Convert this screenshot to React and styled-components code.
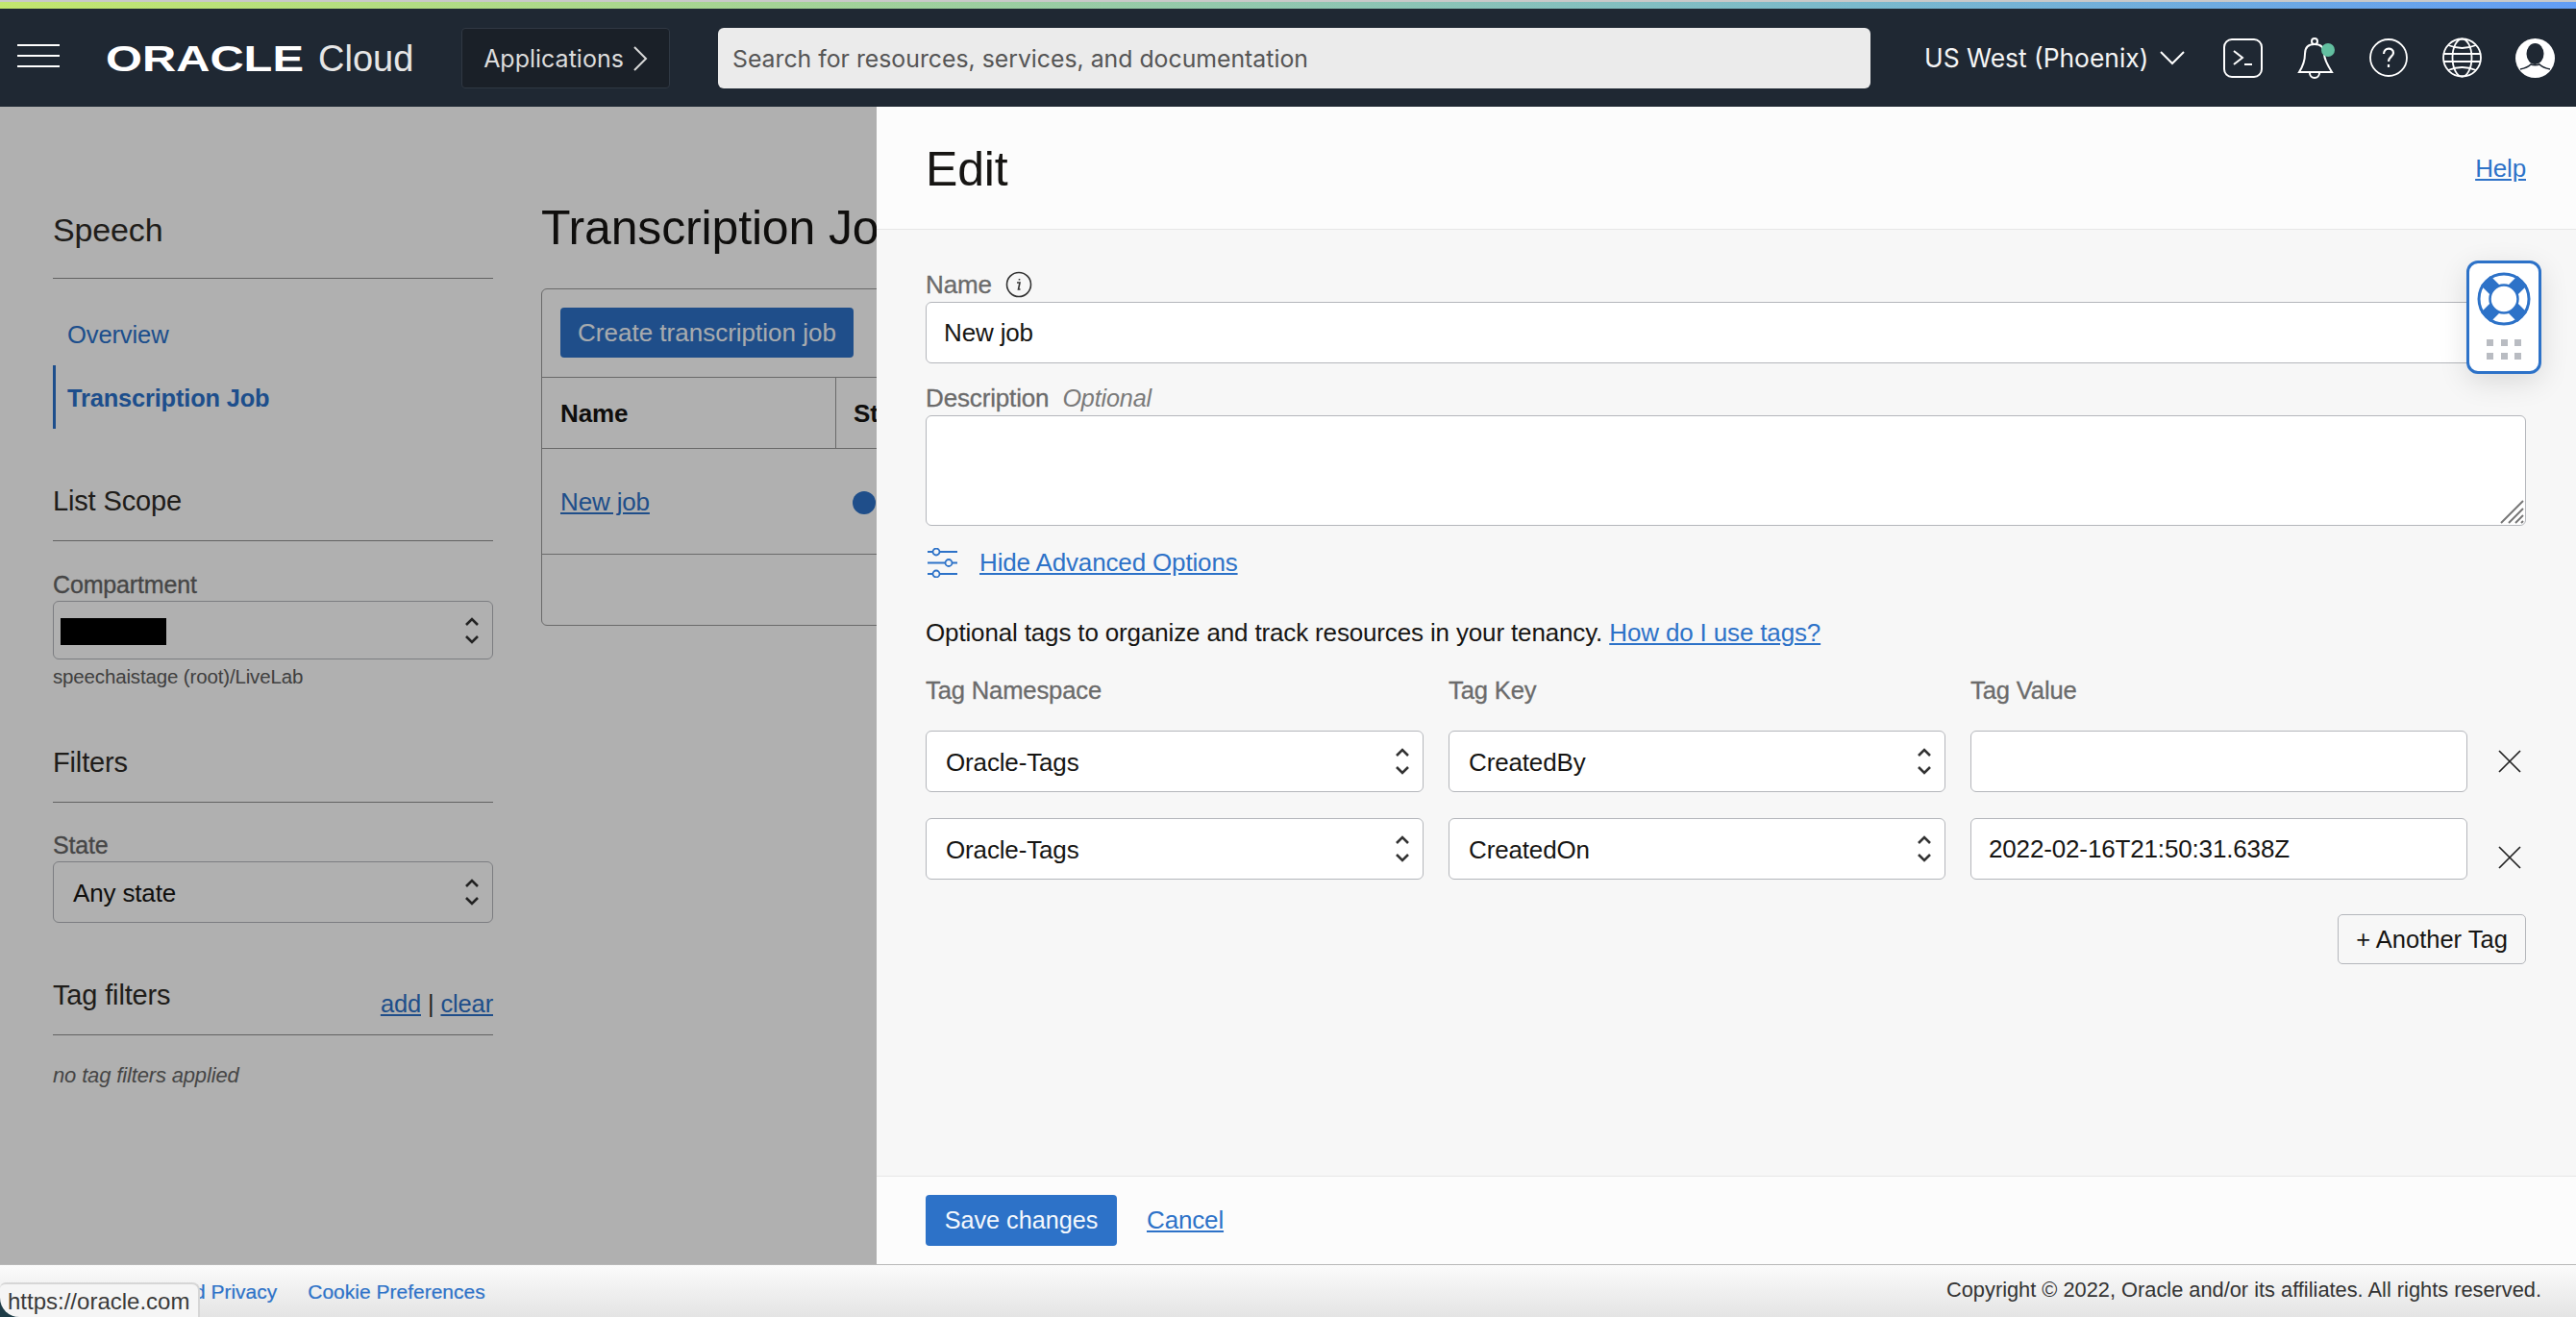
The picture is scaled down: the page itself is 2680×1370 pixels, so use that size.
import styled, { createGlobalStyle } from 'styled-components';

const GlobalStyle = createGlobalStyle`
  html, body { margin: 0; padding: 0; height: 100%; }
  body { font-family: "Liberation Sans", Arial, sans-serif; font-size: 26px; letter-spacing: -0.15px; color: #161513; background: #fff; }
  * { box-sizing: border-box; }
  a { color: #2d72c8; }
`;

const Page = styled.div`
  display: flex;
  flex-direction: column;
  height: 1370px;
  width: 2680px;
  overflow: hidden;
`;
const TopStrip = styled.div`
  height: 9px;
  border-top: 2px solid #c9c9c9;
  background: linear-gradient(90deg, #c2e66e 0%, #7ab9cc 72%, #629df5 100%);
`;
const NavBar = styled.header`
  display: flex;
  align-items: center;
  flex: none;
  height: 102px;
  background: #1f2833;
  color: #fff;
  font-family: Inter, "Liberation Sans", sans-serif;
  letter-spacing: 0;
`;
const Hamburger = styled.div`
  display: flex;
  flex-direction: column;
  gap: 9px;
  width: 44px;
  margin: 0 0 4px 18px;
  span { display: block; height: 2px; background: #fff; }
`;
const Logo = styled.div`
  display: flex;
  align-items: center;
  width: 418px;
  padding: 3px 0 0 48px;
  height: 60px;
`;
const LogoMark = styled.span`
  display: inline-block;
  width: 206px;
  font-family: "Liberation Sans", sans-serif;
  font-weight: 700;
  font-size: 36px;
  transform: scaleX(1.355);
  transform-origin: left center;
`;
const LogoCloud = styled.span`
  font-family: "Liberation Sans", sans-serif;
  font-size: 38px;
  margin-left: 15px;
  color: #e6e6e6;
`;
const AppsButton = styled.div`
  display: flex;
  align-items: center;
  justify-content: center;
  gap: 10px;
  width: 217px;
  height: 63px;
  padding-top: 2px;
  background: #1a2028;
  border: 1px solid #303843;
  border-radius: 4px;
  color: #dcdcdc;
  font-size: 25px;
`;
const SearchBox = styled.div`
  display: flex;
  align-items: center;
  width: 1199px;
  height: 63px;
  margin-left: 50px;
  padding: 2px 0 0 15px;
  background: #ebebeb;
  border-radius: 6px;
  color: #555;
  font-size: 24.8px;
`;
const Region = styled.div`
  display: flex;
  align-items: center;
  gap: 12px;
  margin-left: 56px;
  font-size: 26.4px;
  color: #f5f5f5;
`;
const NavIcons = styled.div`
  display: flex;
  align-items: center;
  gap: 35.5px;
  margin-left: 40px;
  svg { display: block; }
`;

const Content = styled.div`
  position: relative;
  display: flex;
  flex: 1;
  overflow: hidden;
`;
const Sidebar = styled.aside`
  flex: none;
  width: 458px;
  margin-left: 55px;
  padding-top: 104px;
`;
const SideHeading = styled.div`
  display: flex;
  justify-content: space-between;
  align-items: flex-end;
  height: ${(p) => (p.$main ? 75 : 66)}px;
  padding-bottom: ${(p) => (p.$main ? 25 : 16)}px;
  margin-top: ${(p) => p.$top || 0}px;
  border-bottom: 1px solid #8f8f8f;
  line-height: 50px;
  font-size: ${(p) => (p.$main ? 34 : 29)}px;
  color: #2e2b27;
`;
const SideLinks = styled.span`
  font-size: 25.5px;
  line-height: 34px;
  margin-bottom: -1px;
  color: #333;
  a { margin: 0 7px; }
  a:first-child { margin-left: 0; }
  a:last-child { margin-right: 0; }
`;
const SideNav = styled.nav`
  margin-top: 29px;
`;
const SideItem = styled.a`
  display: flex;
  align-items: center;
  height: ${(p) => (p.$active ? 66 : 61)}px;
  padding-left: ${(p) => (p.$active ? 12 : 15)}px;
  padding-top: ${(p) => (p.$active ? 2 : 0)}px;
  padding-bottom: ${(p) => (p.$active ? 0 : 2)}px;
  border-left: ${(p) => (p.$active ? '3px solid #2a72cb' : 'none')};
  font-size: ${(p) => (p.$active ? 25.4 : 25.6)}px;
  font-weight: ${(p) => (p.$active ? 700 : 400)};
  color: #2a72cb;
`;
const SideLabel = styled.div`
  height: 30px;
  margin-top: ${(p) => p.$top}px;
  margin-bottom: 2px;
  line-height: 30px;
  font-size: 25px;
  color: #666;
  -webkit-text-stroke: 0.3px #666;
`;
const Select = styled.div`
  position: relative;
  display: flex;
  align-items: center;
  height: ${(p) => p.$h || 64}px;
  padding-left: ${(p) => p.$pad || 20}px;
  padding-top: 2px;
  background: ${(p) => (p.$plain ? 'transparent' : '#fff')};
  border: 1px solid #b4b6bb;
  border-radius: 6px;
  font-size: 26px;
  color: #161513;
`;
const Updown = styled.svg`
  position: absolute;
  right: 13px;
  top: 50%;
  transform: translateY(-50%);
`;
const Redacted = styled.div`
  width: 110px;
  height: 28px;
  background: #000;
`;
const Hint = styled.div`
  margin-top: 6px;
  height: 24px;
  line-height: 24px;
  font-size: 20.5px;
  color: #5c5c5c;
`;
const NoTags = styled.div`
  margin-top: 30px;
  line-height: 24px;
  font-size: 22px;
  font-style: italic;
  color: #666;
`;

const Main = styled.main`
  flex: none;
  width: 1400px;
  margin-left: 50px;
  padding-top: 96px;
`;
const PageTitle = styled.h1`
  margin: 0 0 33px;
  line-height: 60px;
  font-size: 50px;
  font-weight: 400;
`;
const Card = styled.div`
  width: 1200px;
  height: 351px;
  border: 1px solid #9a9a9a;
  border-radius: 6px;
`;
const CardBar = styled.div`
  height: 92px;
  padding: 19px 19px;
  border-bottom: 1px solid #9a9a9a;
`;
const PrimaryButton = styled.button`
  height: ${(p) => p.$h}px;
  width: ${(p) => p.$w}px;
  padding: 0;
  border: 0;
  border-radius: 4px;
  background: #2d72c8;
  color: #f4f8fd;
  font: inherit;
  font-size: ${(p) => p.$size}px;
`;
const Row = styled.div`
  display: grid;
  grid-template-columns: 305px 1fr;
  align-items: center;
  height: ${(p) => p.$h}px;
  border-bottom: 1px solid #9a9a9a;
`;
const HeadCell = styled.div`
  display: flex;
  align-items: center;
  height: 100%;
  padding-left: 19px;
  padding-top: 2px;
  font-weight: 700;
  & + & { border-left: 1px solid #9a9a9a; padding-left: 18px; }
`;
const BodyCell = styled.div`
  display: flex;
  align-items: center;
  gap: 10px;
  padding-left: 19px;
  padding-top: 2px;
  & + & { padding-left: 18px; }
`;
const StatusDot = styled.span`
  width: 24px;
  height: 24px;
  border-radius: 50%;
  background: #2d72c8;
`;

const Overlay = styled.div`
  position: absolute;
  inset: 0;
  background: rgba(0, 0, 0, 0.31);
`;
const Drawer = styled.section`
  position: absolute;
  top: 0;
  right: 0;
  bottom: 0;
  width: 1768px;
  display: flex;
  flex-direction: column;
  background: #f7f7f7;
`;
const DrawerHead = styled.div`
  display: flex;
  justify-content: space-between;
  align-items: center;
  flex: none;
  height: 128px;
  padding: 2px 52px 0 51px;
  background: #fcfcfc;
  border-bottom: 1px solid #e6e6e6;
`;
const DrawerTitle = styled.h2`
  margin: 0;
  font-size: 50px;
  font-weight: 400;
`;
const DrawerBody = styled.div`
  flex: 1;
  padding: 42px 52px 0 51px;
`;
const FieldLabel = styled.div`
  display: flex;
  align-items: center;
  gap: 14px;
  height: 30px;
  margin-top: ${(p) => p.$top || 0}px;
  margin-bottom: 3px;
  font-size: 26px;
  color: #6b6b6b;
  -webkit-text-stroke: 0.3px #6b6b6b;
  em { color: #7a7a7a; font-size: 25.2px; -webkit-text-stroke: 0; }
`;
const TextInput = styled.input`
  display: block;
  width: 100%;
  height: 64px;
  padding: 0 18px;
  border: 1px solid #b4b6bb;
  border-radius: 6px;
  background: #fff;
  font: inherit;
  font-size: 26px;
  letter-spacing: inherit;
  color: #161513;
`;
const TextAreaWrap = styled.div`
  position: relative;
  height: 115px;
`;
const TextArea = styled.textarea`
  display: block;
  width: 100%;
  height: 100%;
  border: 1px solid #b4b6bb;
  border-radius: 6px;
  background: #fff;
  resize: none;
`;
const Grip = styled.svg`
  position: absolute;
  right: 2px;
  bottom: 2px;
`;
const AdvancedRow = styled.div`
  display: flex;
  align-items: center;
  gap: 22px;
  height: 40px;
  margin-top: 18px;
  padding-left: 2px;
`;
const TagIntro = styled.p`
  margin: 38px 0 0;
  line-height: 30px;
  font-size: 26px;
`;
const TagGrid = styled.div`
  display: grid;
  grid-template-columns: 518px 517px 517px 1fr;
  column-gap: 26px;
  row-gap: 27px;
  margin-top: 30px;
`;
const TagHead = styled.div`
  height: 30px;
  line-height: 30px;
  font-size: 25.6px;
  color: #6b6b6b;
  -webkit-text-stroke: 0.3px #6b6b6b;
`;
const RemoveTag = styled.div`
  display: flex;
  align-items: center;
  justify-content: center;
  margin-top: ${(p) => p.$top || 0}px;
`;
const ActionRow = styled.div`
  display: flex;
  justify-content: flex-end;
  margin-top: 36px;
`;
const GhostButton = styled.button`
  width: 196px;
  height: 52px;
  padding: 0;
  border: 1px solid #b4b6bb;
  border-radius: 5px;
  background: #f7f7f7;
  font: inherit;
  font-size: 25.5px;
  color: #161513;
`;
const DrawerFoot = styled.div`
  display: flex;
  align-items: center;
  gap: 31px;
  flex: none;
  height: 92px;
  padding-left: 51px;
  background: #fcfcfc;
  border-top: 1px solid #e6e6e6;
`;
const HelpWidget = styled.div`
  position: absolute;
  top: 160px;
  right: 36px;
  display: flex;
  flex-direction: column;
  align-items: center;
  width: 78px;
  height: 118px;
  padding-top: 9px;
  background: #fff;
  border: 3px solid #2d72c8;
  border-radius: 12px;
  box-shadow: 0 8px 30px rgba(0, 0, 0, 0.12);
`;
const DotGrid = styled.div`
  display: grid;
  grid-template-columns: repeat(3, 7px);
  gap: 7px 7.5px;
  margin-top: 14px;
  span { width: 7px; height: 7px; background: #b9bcc2; }
`;

const Footer = styled.footer`
  position: relative;
  display: flex;
  justify-content: space-between;
  align-items: center;
  flex: none;
  height: 55px;
  padding: 0 36px 2px 49px;
  border-top: 1px solid #b8b8b8;
  background: linear-gradient(180deg, #fbfbfb 0%, #e4e4e4 100%);
  letter-spacing: 0;
  color: #333;
  a { text-decoration: none; margin-right: 32px; font-size: 21px; -webkit-text-stroke: 0.2px #2d72c8; }
  &::before {
    content: '';
    position: absolute;
    left: 0;
    bottom: 0;
    width: 20px;
    height: 20px;
    background: #1d3c47;
  }
`;
const Copyright = styled.span`
  font-size: 21.8px;
`;
const StatusTip = styled.div`
  position: absolute;
  left: 0;
  bottom: 0;
  width: 208px;
  height: 36px;
  padding-left: 8px;
  background: #f5f5f5;
  border-top: 2px solid #d6d6d6;
  border-right: 2px solid #d6d6d6;
  border-radius: 6px 8px 0 20px;
  line-height: 36px;
  font-size: 24px;
  color: #3a3a3a;
`;

const Chevron = ({ d, w, h, color = '#fff', sw = 2 }) => (
  <svg width={w} height={h} viewBox={`0 0 ${w} ${h}`} fill="none" stroke={color} strokeWidth={sw}>
    <path d={d} />
  </svg>
);

const Arrows = () => (
  <Updown width="16" height="30" viewBox="0 0 16 30" fill="none" stroke="#333" strokeWidth="2.6">
    <path d="M2 9l6-6 6 6M2 21l6 6 6-6" />
  </Updown>
);

const TerminalIcon = () => (
  <svg width="41" height="41" viewBox="0 0 41 41" fill="none" stroke="#fff" strokeWidth="2">
    <rect x="1" y="1" width="39" height="39" rx="8" />
    <path d="M11 13l9 7-9 7M22 27h8" />
  </svg>
);

const BellIcon = () => (
  <svg width="40" height="43" viewBox="0 0 40 43" fill="none" stroke="#fff" strokeWidth="2">
    <circle cx="18" cy="4" r="3" />
    <path d="M2 36C7 28 8 22 8 17 8 10 12 7 18 7s10 3 10 10c0 5 3 11 8 19z" />
    <path d="M13 37a5 5 0 0 0 10 0" />
    <circle cx="32" cy="13" r="7" fill="#62bfa0" stroke="none" />
  </svg>
);

const HelpIcon = () => (
  <svg width="40" height="40" viewBox="0 0 40 40" fill="none" stroke="#fff" strokeWidth="1.800">
    <circle cx="20" cy="20" r="19" />
    <path d="M15 16c0-7 10-7 10-1 0 4-5 4-5 9" strokeWidth="2.200" />
    <path d="M20 27v3" strokeWidth="2.200" />
  </svg>
);

const GlobeIcon = () => (
  <svg width="41" height="42" viewBox="0 0 41 42" fill="none" stroke="#fff" strokeWidth="1.800">
    <circle cx="20.500" cy="21" r="19.500" />
    <ellipse cx="20.500" cy="21" rx="10" ry="19.500" />
    <path d="M1 17h39M1 25h39M6 8q14.500 6 29 0M6 34q14.500-6 29 0" />
  </svg>
);

const UserIcon = () => (
  <svg width="41" height="41" viewBox="0 0 41 41">
    <circle cx="20.500" cy="20.500" r="20.500" fill="#fff" />
    <ellipse cx="20.500" cy="16" rx="9" ry="11" fill="#1f2833" />
    <path d="M5 32c5-1 9-3 11-5 2 1 7 1 9 0 2 2 6 4 11 5" fill="none" stroke="#1f2833" strokeWidth="1.500" />
  </svg>
);

const InfoIcon = () => (
  <svg width="28" height="28" viewBox="0 0 28 28" fill="none" stroke="#333" strokeWidth="1.600">
    <circle cx="14" cy="14" r="12.500" />
    <path d="M12 12h3l-1.500 7h2M14.500 8v1.500" />
  </svg>
);

const SlidersIcon = () => (
  <svg width="32" height="31" viewBox="0 0 32 31" fill="none" stroke="#2d72c8" strokeWidth="1.800">
    <circle cx="9" cy="4" r="3.500" />
    <path d="M0 4h5M13 4h18" />
    <circle cx="22" cy="15.500" r="3.500" />
    <path d="M0 15.500h18M26 15.500h5" />
    <circle cx="9" cy="27" r="3.500" />
    <path d="M0 27h5M13 27h18" />
  </svg>
);

const CloseIcon = () => (
  <svg width="24" height="24" viewBox="0 0 24 24" fill="none" stroke="#222" strokeWidth="1.700">
    <path d="M1 1l22 22M23 1L1 23" />
  </svg>
);

const LifeBuoy = () => (
  <svg width="56" height="56" viewBox="0 0 56 56">
    <circle cx="28" cy="28" r="26" fill="#fff" stroke="#2d72c8" strokeWidth="3" />
    <path d="M9 9l11 11M47 9L36 20M9 47l11-11M47 47L36 36" stroke="#2d72c8" strokeWidth="14" />
    <circle cx="28" cy="28" r="14.500" fill="#fff" stroke="#2d72c8" strokeWidth="2.500" />
  </svg>
);

const tagRows = [
  { key: 'CreatedBy', value: '', closeTop: 0 },
  { key: 'CreatedOn', value: '2022-02-16T21:50:31.638Z', closeTop: 18 },
];

export default function App() {
  return (
    <Page>
      <GlobalStyle />
      <TopStrip />
      <NavBar>
        <Hamburger>
          <span />
          <span />
          <span />
        </Hamburger>
        <Logo>
          <LogoMark>ORACLE</LogoMark>
          <LogoCloud>Cloud</LogoCloud>
        </Logo>
        <AppsButton>
          Applications
          <Chevron w={15} h={26} d="M1 1l12 12L1 25" color="#d8d8d8" />
        </AppsButton>
        <SearchBox>Search for resources, services, and documentation</SearchBox>
        <Region>
          US West (Phoenix)
          <Chevron w={26} h={16} d="M1 2l12 12L25 2" />
        </Region>
        <NavIcons>
          <TerminalIcon />
          <BellIcon />
          <HelpIcon />
          <GlobeIcon />
          <UserIcon />
        </NavIcons>
      </NavBar>

      <Content>
        <Sidebar>
          <SideHeading $main>Speech</SideHeading>
          <SideNav>
            <SideItem>Overview</SideItem>
            <SideItem $active>Transcription Job</SideItem>
          </SideNav>
          <SideHeading $top={51}>List Scope</SideHeading>
          <SideLabel $top={30}>Compartment</SideLabel>
          <Select $h={61} $pad={7} $plain>
            <Redacted />
            <Arrows />
          </Select>
          <Hint>speechaistage (root)/LiveLab</Hint>
          <SideHeading $top={53}>Filters</SideHeading>
          <SideLabel $top={29}>State</SideLabel>
          <Select $plain>
            Any state
            <Arrows />
          </Select>
          <SideHeading $top={51}>
            Tag filters
            <SideLinks>
              <a href="#add">add</a>|<a href="#clear">clear</a>
            </SideLinks>
          </SideHeading>
          <NoTags>no tag filters applied</NoTags>
        </Sidebar>
        <Main>
          <PageTitle>Transcription Jobs</PageTitle>
          <Card>
            <CardBar>
              <PrimaryButton $w={305} $h={52} $size={26}>Create transcription job</PrimaryButton>
            </CardBar>
            <Row $h={74}>
              <HeadCell>Name</HeadCell>
              <HeadCell>Status</HeadCell>
            </Row>
            <Row $h={110}>
              <BodyCell>
                <a href="#job">New job</a>
              </BodyCell>
              <BodyCell>
                <StatusDot />
                Succeeded
              </BodyCell>
            </Row>
          </Card>
        </Main>
        <Overlay />
        <Drawer>
          <DrawerHead>
            <DrawerTitle>Edit</DrawerTitle>
            <a href="#help">Help</a>
          </DrawerHead>
          <DrawerBody>
            <FieldLabel>
              Name
              <InfoIcon />
            </FieldLabel>
            <TextInput readOnly value="New job" />
            <FieldLabel $top={21}>
              Description
              <em>Optional</em>
            </FieldLabel>
            <TextAreaWrap>
              <TextArea readOnly />
              <Grip width="26" height="26" viewBox="0 0 26 26" stroke="#777" strokeWidth="2">
                <path d="M2 25L25 2M10 25L25 10M17 25l8-8M23 25l2-2" />
              </Grip>
            </TextAreaWrap>
            <AdvancedRow>
              <SlidersIcon />
              <a href="#advanced">Hide Advanced Options</a>
            </AdvancedRow>
            <TagIntro>
              Optional tags to organize and track resources in your tenancy.{' '}
              <a href="#tags">How do I use tags?</a>
            </TagIntro>
            <TagGrid>
              <TagHead>Tag Namespace</TagHead>
              <TagHead>Tag Key</TagHead>
              <TagHead>Tag Value</TagHead>
              <span />
              {tagRows.map((row) => [
                <Select key={`${row.key}-ns`}>
                  Oracle-Tags
                  <Arrows />
                </Select>,
                <Select key={`${row.key}-key`}>
                  {row.key}
                  <Arrows />
                </Select>,
                <TextInput key={`${row.key}-value`} readOnly value={row.value} />,
                <RemoveTag key={`${row.key}-x`} $top={row.closeTop}>
                  <CloseIcon />
                </RemoveTag>,
              ])}
            </TagGrid>
            <ActionRow>
              <GhostButton>+ Another Tag</GhostButton>
            </ActionRow>
          </DrawerBody>
          <DrawerFoot>
            <PrimaryButton $w={199} $h={53} $size={25.2}>Save changes</PrimaryButton>
            <a href="#cancel">Cancel</a>
          </DrawerFoot>
          <HelpWidget>
            <LifeBuoy />
            <DotGrid>
              <span />
              <span />
              <span />
              <span />
              <span />
              <span />
            </DotGrid>
          </HelpWidget>
        </Drawer>
      </Content>

      <Footer>
        <div>
          <a href="#privacy">Terms of Use and Privacy</a>
          <a href="#cookies">Cookie Preferences</a>
        </div>
        <Copyright>Copyright © 2022, Oracle and/or its affiliates. All rights reserved.</Copyright>
        <StatusTip>https://oracle.com</StatusTip>
      </Footer>
    </Page>
  );
}
